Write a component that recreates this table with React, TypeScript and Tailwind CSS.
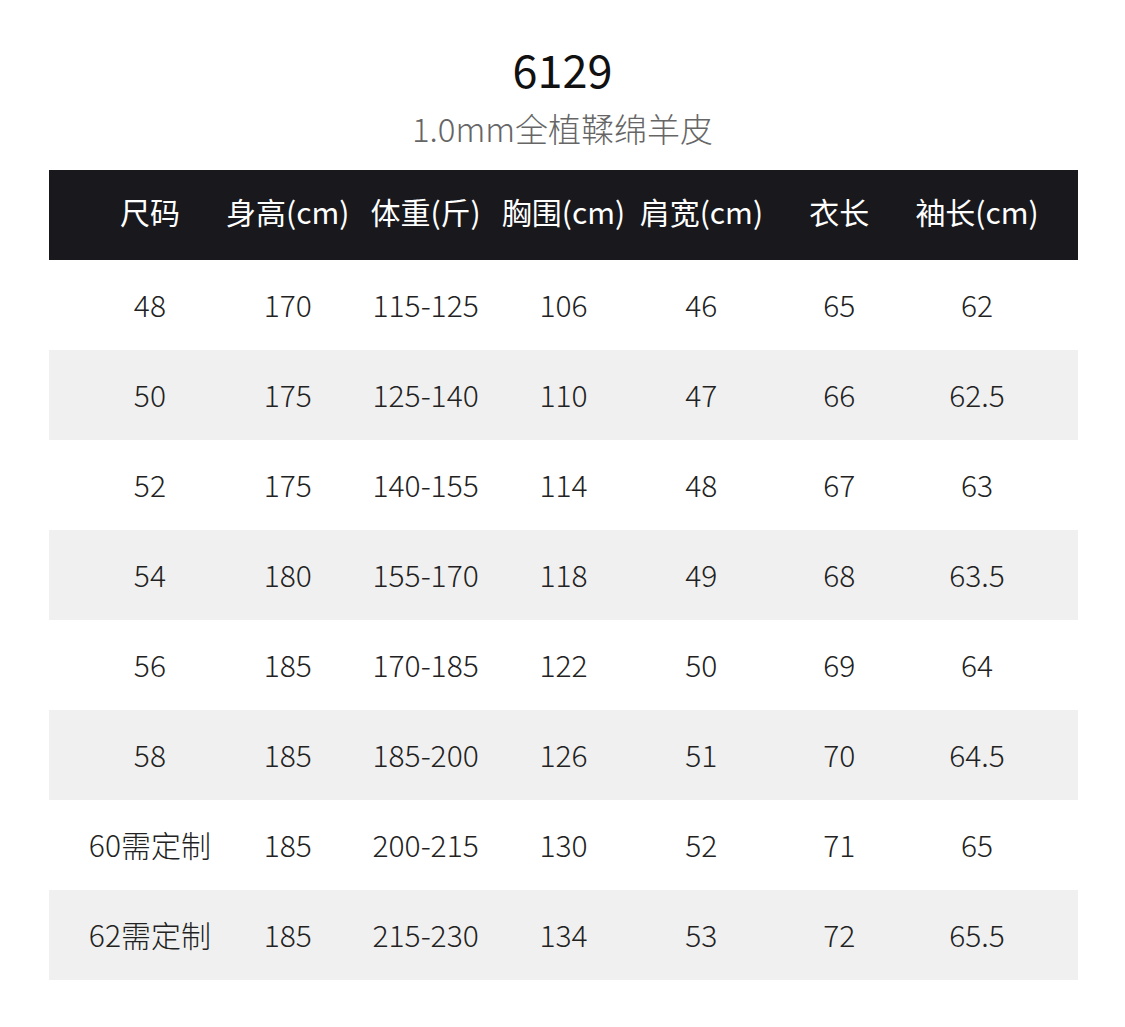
const HEADERS = ["尺码", "身高(cm)", "体重(斤)", "胸围(cm)", "肩宽(cm)", "衣长", "袖长(cm)"];

const ROWS = [
  ["48", "170", "115-125", "106", "46", "65", "62"],
  ["50", "175", "125-140", "110", "47", "66", "62.5"],
  ["52", "175", "140-155", "114", "48", "67", "63"],
  ["54", "180", "155-170", "118", "49", "68", "63.5"],
  ["56", "185", "170-185", "122", "50", "69", "64"],
  ["58", "185", "185-200", "126", "51", "70", "64.5"],
  ["60需定制", "185", "200-215", "130", "52", "71", "65"],
  ["62需定制", "185", "215-230", "134", "53", "72", "65.5"],
];

export default function App() {
  return (
    <div
      className="w-[1125px] h-[1027px] bg-white pt-[41px]"
      style={{ fontFamily: '"Noto Sans CJK SC", "Noto Sans", sans-serif' }}
    >
      {/* Title */}
      <div className="text-center text-[45px] leading-[56px] text-[#111] font-normal">6129</div>
      <div className="text-center text-[33px] leading-[40px] mt-[11px] text-[#666] font-light">
        1.0mm全植鞣绵羊皮
      </div>

      {/* Size table */}
      <div className="mx-[49px] mt-[22px] w-[1029px]">
        <div className="grid grid-cols-7 h-[90px] items-center bg-[#18181d] px-[32px] pb-[7px] text-white text-[30px]">
          {HEADERS.map((h) => (
            <div key={h} className="text-center whitespace-nowrap">
              {h}
            </div>
          ))}
        </div>
        {ROWS.map((row, i) => (
          <div
            key={row[0]}
            className={
              "grid grid-cols-7 h-[90px] items-center px-[32px] pb-[2px] text-[#222] text-[30px] font-light " +
              (i % 2 === 1 ? "bg-[#f0f0f0]" : "bg-white")
            }
          >
            {row.map((c, j) => (
              <div key={j} className="text-center whitespace-nowrap">
                {c}
              </div>
            ))}
          </div>
        ))}
      </div>
    </div>
  );
}
